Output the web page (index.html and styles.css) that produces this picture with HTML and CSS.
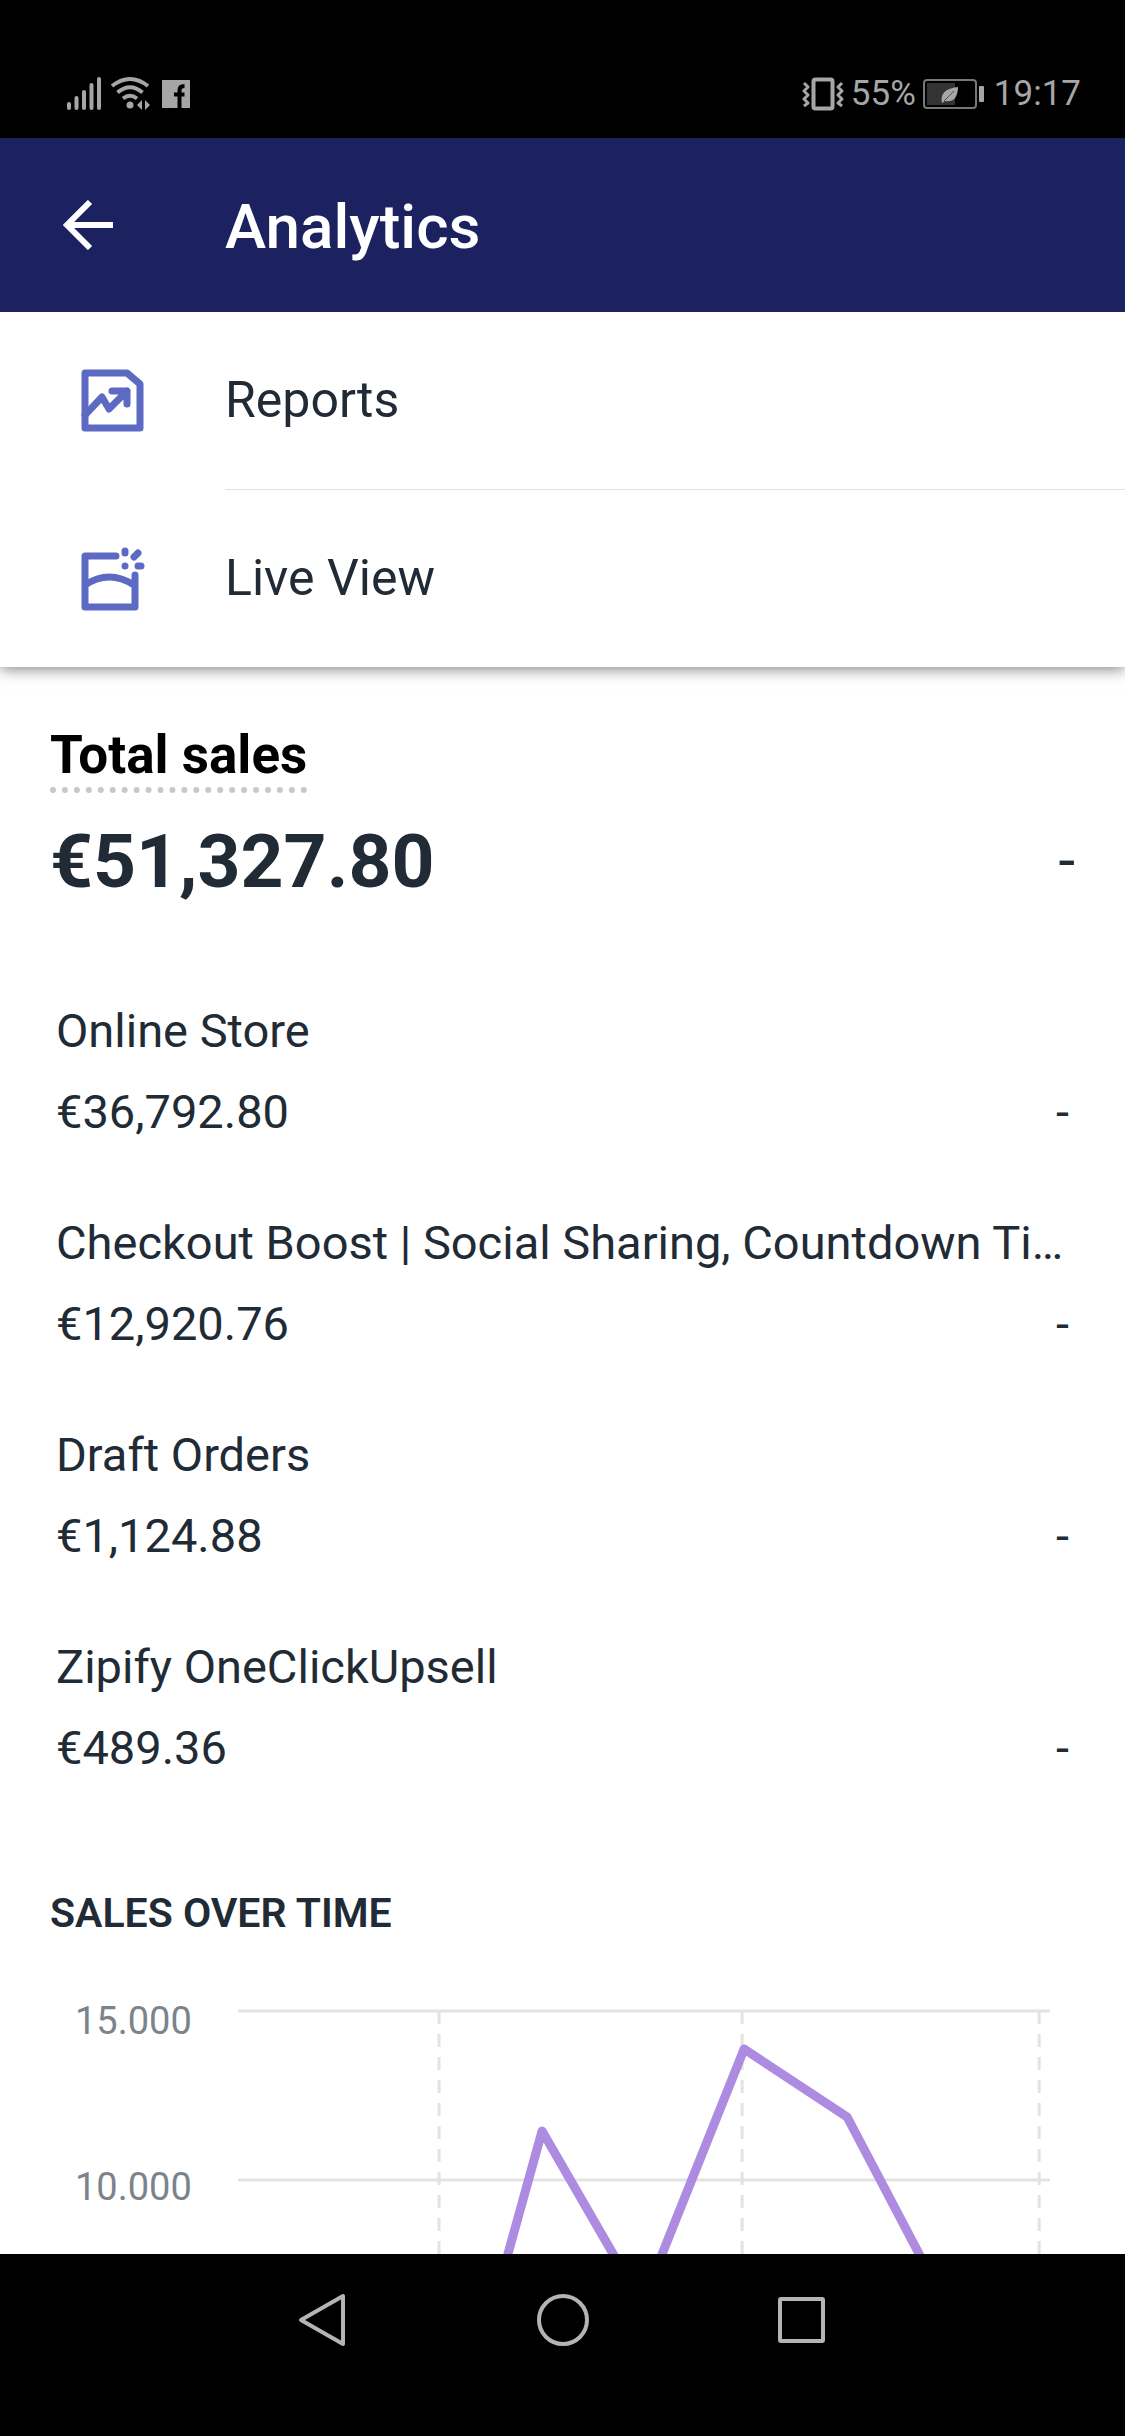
FILE: index.html
```
<!DOCTYPE html>
<html lang="en">
<head>
    <meta charset="UTF-8">
    <meta name="viewport" content="width=device-width, initial-scale=1.0">
    <title>Analytics</title>
    <link rel="stylesheet" href="styles.css">
</head>
<body>
    <!-- Status bar -->
    <div class="status-bar">
        <div class="status-group">
            <svg class="icon-signal" viewBox="0 0 36 36" width="36" height="36">
                <path d="M3 32v-4M10.500 32V22M18 32V16M25.500 32V9M33 32V3" />
            </svg>
            <svg class="icon-wifi" viewBox="0 0 40 36" width="40" height="36">
                <path d="M2 10Q20-4 38 10M7.500 16.500Q20 6 32.500 16.500M13 22.500Q20 17 27 22.500" />
                <circle cx="20" cy="29" r="3.500" />
                <path class="solid" d="M32 24v10l-5-5zM35 24v10l5-5z" />
            </svg>
            <svg class="icon-facebook" viewBox="0 0 28 28" width="28" height="28">
                <rect width="28" height="28" />
                <path d="M17.500 28V10q0-4 5-4M12 14.500h10.500" />
            </svg>
        </div>
        <div class="status-group">
            <svg class="icon-vibrate" viewBox="0 0 42 34" width="42" height="34">
                <rect x="11.500" y="2.500" width="19" height="29" rx="2" />
                <path class="thin" d="M2 6l4 4-4 4 4 4-4 4 4 4-4 3M40 6l-4 4 4 4-4 4 4 4-4 4 4 3" />
            </svg>
            <span class="battery-level">55%</span>
            <svg class="icon-battery" viewBox="0 0 62 30" width="62" height="30">
                <rect class="charge" x="4" y="4" width="28" height="22" />
                <rect class="case" x="1" y="1" width="52" height="28" rx="3" />
                <path class="leaf" d="M19 24C17 13 25 9 35 8C35 17 31 24 22 22z" />
                <path class="vein" d="M21 22L31 12" />
                <rect class="tip" x="56" y="7" width="5" height="16" rx="1" />
            </svg>
            <span class="clock">19:17</span>
        </div>
    </div>

    <header class="app-bar">
        <button class="back" aria-label="Back">
            <svg viewBox="0 0 50 50" width="50" height="50">
                <path d="M50 25H5M27 2L4 25L27 48" />
            </svg>
        </button>
        <h1>Analytics</h1>
    </header>

    <nav class="menu">
        <a class="menu-item" href="#reports">
            <svg viewBox="0 0 64 64" width="64" height="64">
                <path d="M4 4H46L59 15V59H4Z" />
                <path d="M4 46L21 28L28 40L46 22M31 22H46V35" />
            </svg>
            <span>Reports</span>
        </a>
        <a class="menu-item" href="#live">
            <svg viewBox="0 0 64 64" width="64" height="64">
                <path d="M35 9H4V60H54V28M4 38Q28 22 53 38" />
                <path d="M44 4V6M53 10L57 6M44 19V19M57 19H60" />
            </svg>
            <span>Live View</span>
        </a>
    </nav>

    <main class="content">
        <section class="sales">
            <h2>Total sales</h2>
            <div class="total">
                <strong>€51,327.80</strong>
                <span class="change">-</span>
            </div>

            <ul class="channels">
                <li>
                    <p class="name">Online Store</p>
                    <p class="amount"><span>€36,792.80</span><span>-</span></p>
                </li>
                <li>
                    <p class="name">Checkout Boost | Social Sharing, Countdown Ti…</p>
                    <p class="amount"><span>€12,920.76</span><span>-</span></p>
                </li>
                <li>
                    <p class="name">Draft Orders</p>
                    <p class="amount"><span>€1,124.88</span><span>-</span></p>
                </li>
                <li>
                    <p class="name">Zipify OneClickUpsell</p>
                    <p class="amount"><span>€489.36</span><span>-</span></p>
                </li>
            </ul>
        </section>

        <section class="over-time">
            <h3>Sales over time</h3>
            <div class="chart">
                <div class="axis">
                    <span>15.000</span>
                    <span>10.000</span>
                </div>
                <svg class="plot" viewBox="0 0 812 520">
                    <path class="grid" d="M0 12H812M0 181H812M0 350H812M0 519H812" />
                    <path class="grid dashed" d="M201 12V519M504 12V519M801 12V519" />
                    <polyline class="line" points="201,503 304,132 404,305 506,50 609,118 711,312" />
                </svg>
            </div>
        </section>
    </main>

    <!-- System navigation -->
    <div class="system-nav">
        <button aria-label="Back">
            <svg viewBox="0 0 56 56" width="56" height="56">
                <path d="M47 4V52L5 28Z" />
            </svg>
        </button>
        <button aria-label="Home">
            <svg viewBox="0 0 56 56" width="56" height="56">
                <circle cx="28" cy="28" r="24" />
            </svg>
        </button>
        <button aria-label="Recent apps">
            <svg viewBox="0 0 56 56" width="56" height="56">
                <rect x="6" y="7" width="43" height="42" rx="1" />
            </svg>
        </button>
    </div>
</body>
</html>
```
FILE: styles.css
```
* {
    box-sizing: border-box;
}

body {
    margin: 0;
    height: 100vh;
    display: flex;
    flex-direction: column;
    font-family: Roboto, sans-serif;
    background-color: #fff;
    color: #212b36;
}

h1, h2, h3, p, ul {
    margin: 0;
    padding: 0;
}

button {
    padding: 0;
    border: none;
    background: none;
    cursor: pointer;
}

svg {
    display: block;
    flex-shrink: 0;
    fill: none;
    stroke-linejoin: round;
}

/* Status bar */
.status-bar {
    flex-shrink: 0;
    display: flex;
    justify-content: space-between;
    align-items: center;
    height: 138px;
    padding: 50px 44px 0 66px;
    background-color: #000;
    color: #a6a6a6;
    font-size: 35px;
    line-height: 40px;
}

.status-group {
    display: flex;
    align-items: center;
    gap: 8px;
}

.status-group:last-child {
    gap: 7px;
}

.status-group svg {
    stroke: #a6a6a6;
    stroke-width: 4;
}

.icon-signal {
    stroke-linecap: round;
}

.icon-wifi circle,
.icon-wifi .solid {
    fill: #a6a6a6;
    stroke: none;
}

.icon-facebook {
    margin-left: 4px;
}

.icon-facebook rect {
    fill: #a6a6a6;
    stroke: none;
}

.icon-facebook path {
    stroke: #000;
}

.icon-vibrate .thin {
    stroke-width: 3;
}

.icon-battery .case {
    stroke: #777;
    stroke-width: 2;
}

.icon-battery .charge {
    fill: #333;
    stroke: none;
}

.icon-battery .leaf,
.icon-battery .tip {
    fill: #a6a6a6;
    stroke: none;
}

.icon-battery .vein {
    stroke: #555;
    stroke-width: 1;
}

.clock {
    margin-left: 2px;
}

/* App bar */
.app-bar {
    flex-shrink: 0;
    position: relative;
    z-index: 1;
    display: flex;
    align-items: center;
    gap: 112px;
    height: 174px;
    padding: 0 63px;
    background-color: #1c2260;
    color: #fff;
}

.app-bar h1 {
    padding-top: 4px;
    font-size: 62px;
    font-weight: 500;
    line-height: 72px;
}

.back svg {
    stroke: #fff;
    stroke-width: 6;
    stroke-linejoin: miter;
}

/* Menu */
.menu {
    flex-shrink: 0;
    box-shadow: 0 2px 14px rgba(0, 0, 0, 0.5);
}

.menu-item {
    display: flex;
    align-items: center;
    gap: 80px;
    padding-left: 81px;
    color: #212b36;
    font-size: 50px;
    line-height: 177px;
    text-decoration: none;
}

.menu-item span {
    flex: 1;
}

.menu-item:first-child span {
    border-bottom: 1px solid #e1e1e1;
}

.menu-item svg {
    stroke: #5c6ac4;
    stroke-width: 7;
    stroke-linecap: round;
}

/* Content */
.content {
    flex: 1;
    min-height: 0;
    overflow: hidden;
    padding: 58px 50px 0;
}

.sales h2 {
    width: fit-content;
    padding-bottom: 2px;
    border-bottom: 6px dotted #c8c8c8;
    color: #000;
    font-size: 53px;
    font-weight: 700;
    line-height: 60px;
}

.total {
    display: flex;
    justify-content: space-between;
    align-items: center;
    margin-top: 24px;
    font-size: 75px;
    line-height: 88px;
}

.total .change {
    font-size: 60px;
}

.channels {
    display: flex;
    flex-direction: column;
    gap: 75px;
    margin-top: 98px;
    padding: 0 6px;
    list-style: none;
    font-size: 47px;
    line-height: 56px;
}

.channels .name {
    overflow: hidden;
    text-overflow: ellipsis;
    white-space: nowrap;
}

.channels .amount {
    display: flex;
    justify-content: space-between;
    margin-top: 25px;
}

/* Chart */
.over-time h3 {
    margin-top: 113px;
    font-size: 41px;
    font-weight: 600;
    line-height: 48px;
    text-transform: uppercase;
}

.chart {
    display: flex;
    align-items: flex-start;
    gap: 46px;
    margin-top: 62px;
    padding: 0 25px;
}

.axis {
    display: flex;
    flex-direction: column;
    gap: 122px;
    color: #7a848c;
    font-size: 38px;
    line-height: 44px;
}

.plot {
    flex: 1;
    min-width: 0;
}

.plot .grid {
    stroke: #e3e3e3;
    stroke-width: 3;
}

.plot .dashed {
    stroke-dasharray: 13 10;
}

.plot .line {
    stroke: #ad8be0;
    stroke-width: 9;
}

/* System navigation */
.system-nav {
    flex-shrink: 0;
    display: flex;
    justify-content: center;
    align-items: flex-start;
    gap: 183px;
    height: 182px;
    padding-top: 38px;
    background-color: #000;
}

.system-nav svg {
    stroke: #b4b4b4;
    stroke-width: 4;
}
```
